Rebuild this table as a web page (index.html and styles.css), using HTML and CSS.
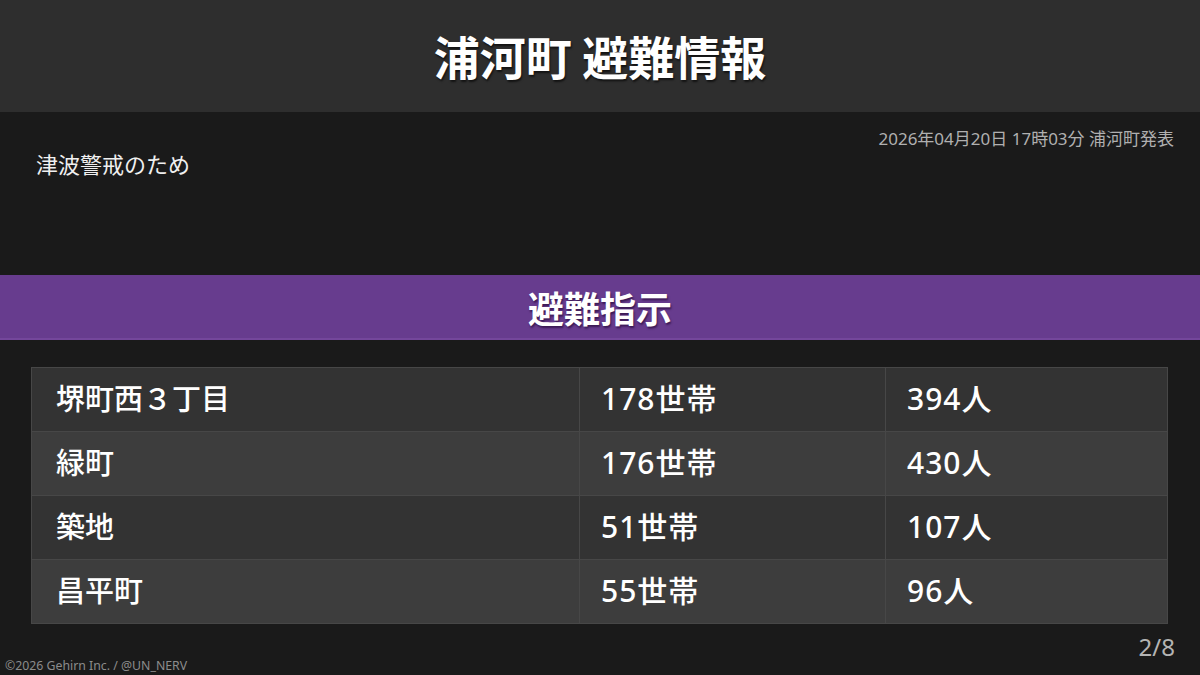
FILE: index.html
```html
<!DOCTYPE html>
<html lang="ja">
<head>
<meta charset="utf-8">
<link rel="stylesheet" href="styles.css">
</head>
<body>
<div class="page">
  <header class="header"><h1 class="title">浦河町 避難情報</h1></header>
  <section class="info">
    <div class="issued">2026年04月20日 17時03分 浦河町発表</div>
    <div class="reason">津波警戒のため</div>
  </section>
  <div class="band">避難指示</div>
  <div class="table">
    <div class="row odd"><div class="cell">堺町西３丁目</div><div class="cell num">178世帯</div><div class="cell num">394人</div></div>
    <div class="row even"><div class="cell">緑町</div><div class="cell num">176世帯</div><div class="cell num">430人</div></div>
    <div class="row odd"><div class="cell">築地</div><div class="cell num">51世帯</div><div class="cell num">107人</div></div>
    <div class="row even"><div class="cell">昌平町</div><div class="cell num">55世帯</div><div class="cell num">96人</div></div>
  </div>
  <div class="pager">2/8</div>
  <footer class="copy">©2026 Gehirn Inc. / @UN_NERV</footer>
</div>
</body>
</html>
```
FILE: styles.css
```css
* { box-sizing: border-box; margin: 0; padding: 0; }
html, body { width: 1200px; height: 675px; overflow: hidden; background: #1a1a1a; }
body { font-family: "Noto Sans", "Noto Sans CJK JP", sans-serif; color: #fff; }
.page { width: 1200px; height: 675px; display: flex; flex-direction: column; position: relative; }
.header { height: 112px; background: #2e2e2e; display: flex; align-items: center; justify-content: center; }
.title { font-family: "Noto Sans CJK JP", sans-serif; font-size: 46px; font-weight: 700; text-shadow: 1px 2px 2px rgba(0,0,0,0.6); line-height: 1; padding-bottom: 2px; }
.info { height: 163px; padding: 16px 26px 0 36px; display: flex; flex-direction: column; }
.issued { align-self: flex-end; font-size: 17px; color: #b0b0b0; line-height: 22px; }
.reason { font-size: 22px; color: #f0f0f0; line-height: 28px; margin-top: 0; }
.band { height: 65px; background: #673c8e; border-bottom: 2px solid #74479b; display: flex; align-items: center; justify-content: center; font-family: "Noto Sans CJK JP", sans-serif; font-size: 36px; font-weight: 700; text-shadow: 1px 2px 2px rgba(40,10,60,0.7); line-height: 1; padding-top: 1px; }
.table { margin: 27px 32px 0 31px; border: 1px solid #474747; display: flex; flex-direction: column; }
.row { display: grid; grid-template-columns: 547px 306px 1fr; height: 64px; border-top: 1px solid #474747; }
.row:first-child { border-top: none; height: 63px; }
.odd { background: #333333; }
.even { background: #3d3d3d; }
.cell { display: flex; align-items: center; padding-left: 24px; font-size: 29px; font-weight: 500; border-left: 1px solid #474747; line-height: 1; padding-bottom: 2px; }
.cell:first-child { border-left: none; }
.cell + .cell { padding-left: 21px; }
.num { font-size: 30px; letter-spacing: 1px; }
.pager { position: absolute; right: 25px; top: 632px; font-size: 24px; color: #b4b4b4; line-height: 30px; }
.copy { position: absolute; left: 5px; bottom: 1px; font-size: 12.3px; color: #8c8c8c; line-height: 16px; }
```
